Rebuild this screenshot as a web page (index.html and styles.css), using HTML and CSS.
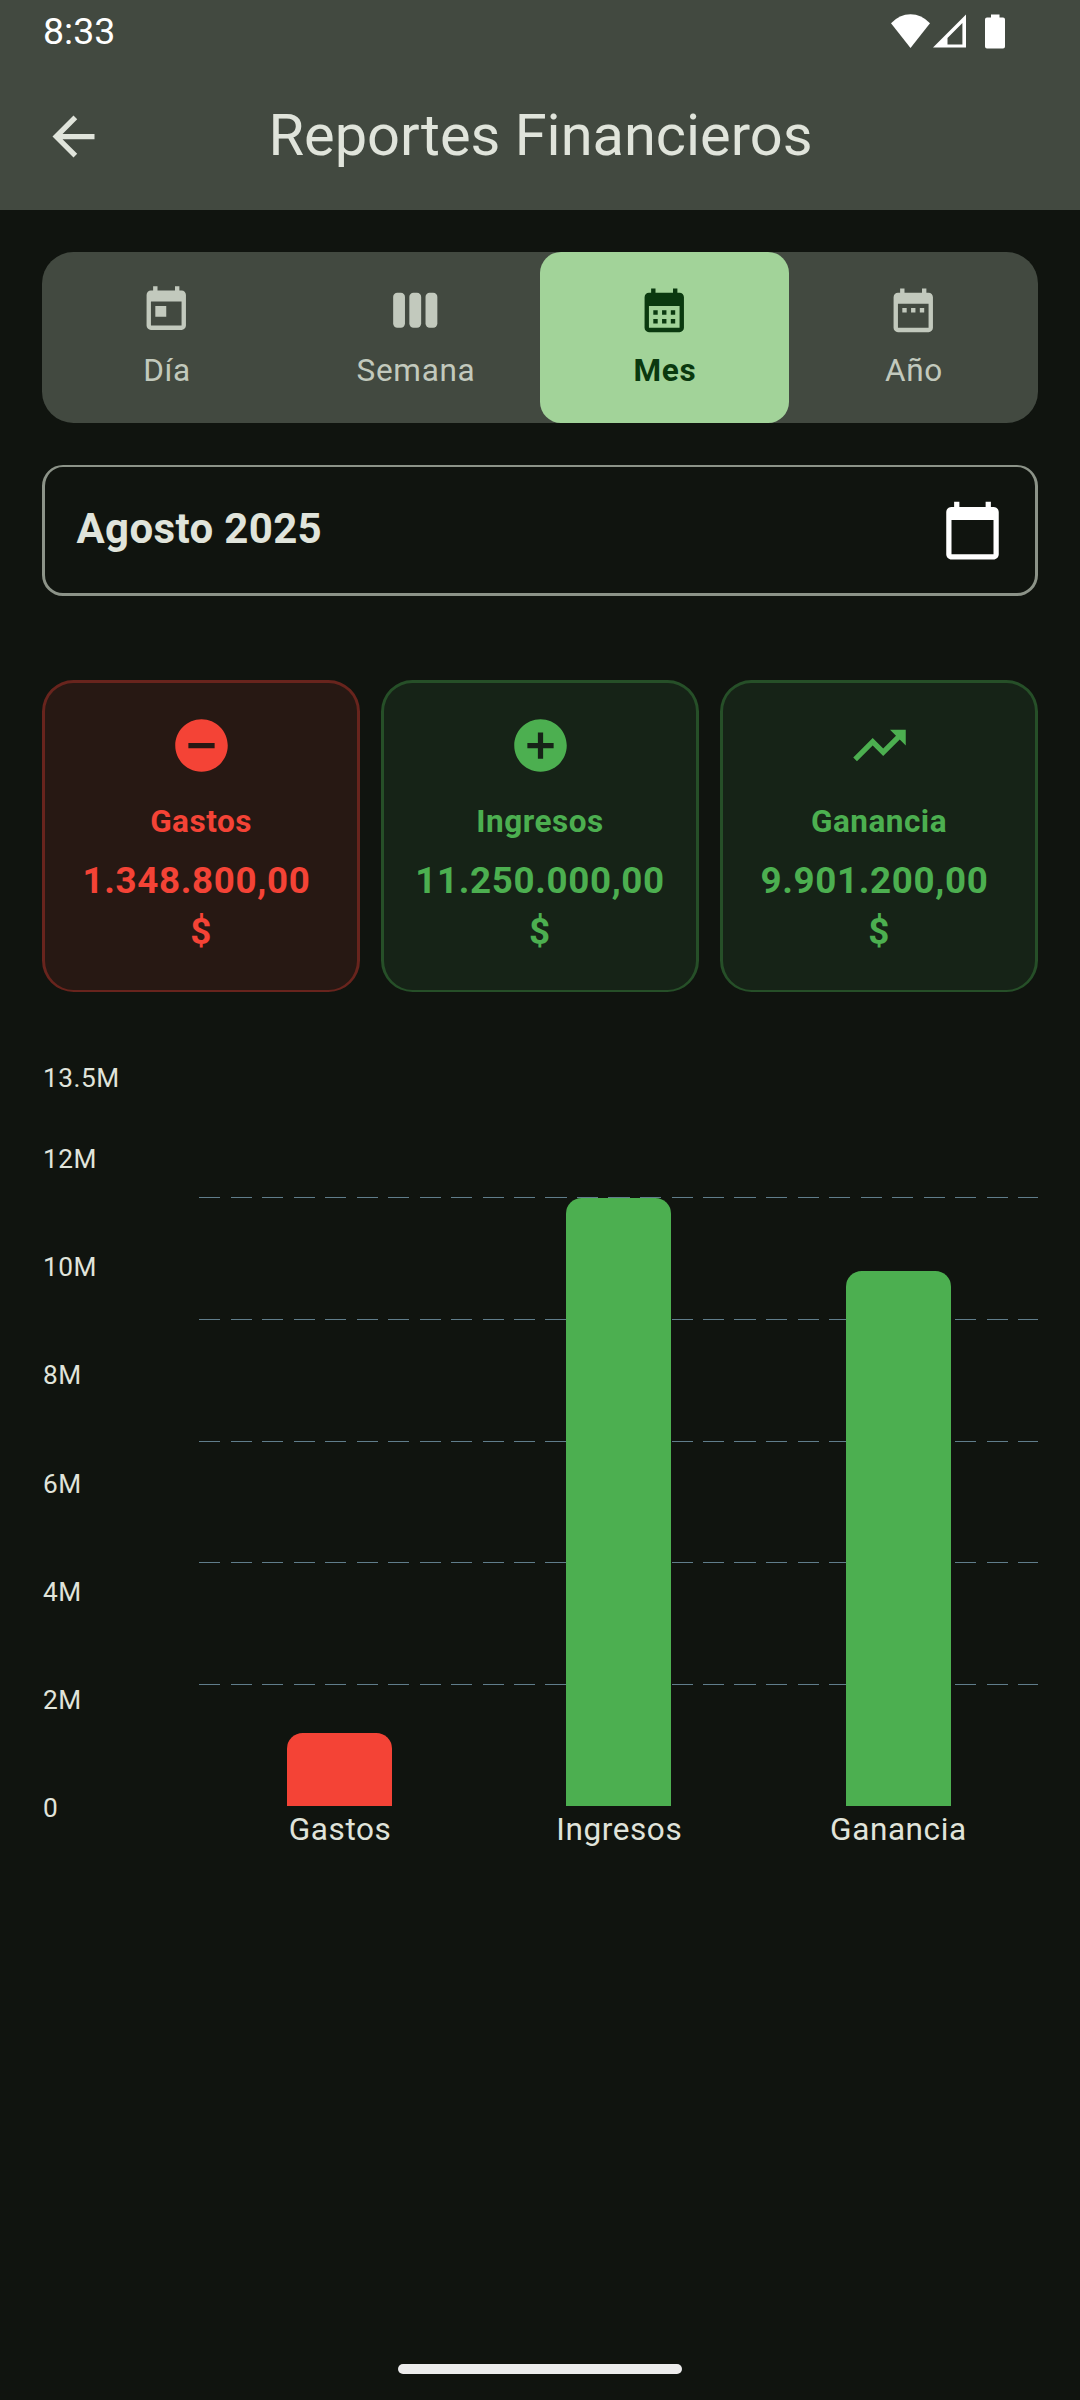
FILE: index.html
```html
<!DOCTYPE html>
<html lang="es">
<head>
<meta charset="utf-8">
<title>Reportes Financieros</title>
<link rel="stylesheet" href="styles.css">
</head>
<body>
<header class="header">
  <div class="status-bar">
    <span class="clock">8:33</span>
    <div class="status-icons">
      <svg class="wifi" viewBox="0 0 39 34"><path d="M0 9.3Q8.5.3 19.5.3T39 9.3L19.5 34z"/></svg>
      <svg class="cell" viewBox="0 0 33 33"><path fill-rule="evenodd" d="M33 0V33H0zM29.4 8.5L14.5 23.4V30H29.4z"/></svg>
      <svg class="battery" viewBox="0 0 20 34"><path d="M6 0h8.5v3H18a2 2 0 0 1 2 2v27a2 2 0 0 1-2 2H2a2 2 0 0 1-2-2V5a2 2 0 0 1 2-2h4z"/></svg>
    </div>
  </div>
  <div class="app-bar">
    <div class="leading"><svg class="icon-lg" viewBox="0 0 24 24"><path d="M20 11H7.83l5.59-5.59L12 4l-8 8 8 8 1.41-1.41L7.83 13H20v-2z"/></svg></div>
    <h1 class="title">Reportes Financieros</h1>
  </div>
</header>

<main class="content">
  <nav class="tabs">
    <div class="tab">
      <svg class="icon-sm" viewBox="0 0 24 24"><path d="M19 3h-1V1h-2v2H8V1H6v2H5c-1.11 0-1.99.9-1.99 2L3 19c0 1.1.89 2 2 2h14c1.1 0 2-.9 2-2V5c0-1.1-.9-2-2-2zm0 16H5V8h14v11zM7 10h5v5H7z"/></svg>
      <span>Día</span>
    </div>
    <div class="tab">
      <svg class="icon-sm" viewBox="0 0 24 24"><rect x="1.9" y="4" width="5.4" height="16" rx="1.9"/><rect x="9.3" y="4" width="5.4" height="16" rx="1.9"/><rect x="16.7" y="4" width="5.4" height="16" rx="1.9"/></svg>
      <span>Semana</span>
    </div>
    <div class="tab tab-selected">
      <svg class="icon-sm" viewBox="0 0 24 24"><path d="M19 4h-1V2h-2v2H8V2H6v2H5c-1.11 0-1.99.9-1.99 2L3 20c0 1.1.89 2 2 2h14c1.1 0 2-.9 2-2V6c0-1.1-.9-2-2-2zm0 16H5V10h14v10zM9 14H7v-2h2v2zm4 0h-2v-2h2v2zm4 0h-2v-2h2v2zm-8 4H7v-2h2v2zm4 0h-2v-2h2v2zm4 0h-2v-2h2v2z"/></svg>
      <span>Mes</span>
    </div>
    <div class="tab">
      <svg class="icon-sm" viewBox="0 0 24 24"><path d="M9 11H7v2h2v-2zm4 0h-2v2h2v-2zm4 0h-2v2h2v-2zm2-7h-1V2h-2v2H8V2H6v2H5c-1.11 0-1.99.9-1.99 2L3 20c0 1.1.89 2 2 2h14c1.1 0 2-.9 2-2V6c0-1.1-.9-2-2-2zm0 16H5V9h14v11z"/></svg>
      <span>Año</span>
    </div>
  </nav>

  <div class="period">
    <span class="period-text">Agosto 2025</span>
    <svg class="icon-lg" viewBox="0 0 24 24"><path d="M20 3h-1V1h-2v2H7V1H5v2H4c-1.1 0-2 .9-2 2v16c0 1.1.9 2 2 2h16c1.1 0 2-.9 2-2V5c0-1.1-.9-2-2-2zm0 18H4V8h16v13z"/></svg>
  </div>

  <section class="cards">
    <div class="card card-red">
      <svg class="icon-lg" viewBox="0 0 24 24"><path d="M12 2C6.48 2 2 6.48 2 12s4.48 10 10 10 10-4.48 10-10S17.52 2 12 2zm5 11H7v-2h10v2z"/></svg>
      <span class="card-label">Gastos</span>
      <div class="card-amount"><span class="figure">1.348.800,00</span><span>$</span></div>
    </div>
    <div class="card card-green">
      <svg class="icon-lg" viewBox="0 0 24 24"><path d="M12 2C6.48 2 2 6.48 2 12s4.48 10 10 10 10-4.48 10-10S17.52 2 12 2zm5 11h-4v4h-2v-4H7v-2h4V7h2v4h4v2z"/></svg>
      <span class="card-label">Ingresos</span>
      <div class="card-amount"><span>11.250.000,00</span><span>$</span></div>
    </div>
    <div class="card card-green">
      <svg class="icon-lg" viewBox="0 0 24 24"><path d="M16 6l2.29 2.29-4.88 4.88-4-4L2 16.59 3.41 18l6-6 4 4 6.3-6.29L22 12V6z"/></svg>
      <span class="card-label">Ganancia</span>
      <div class="card-amount"><span class="figure">9.901.200,00</span><span>$</span></div>
    </div>
  </section>

  <section class="chart">
    <div class="axis">
      <span>13.5M</span><span>12M</span><span>10M</span><span>8M</span><span>6M</span><span>4M</span><span>2M</span><span>0</span>
    </div>
    <div class="plot">
      <div class="gridlines">
        <div class="gridline"></div>
        <div class="gridline"></div>
        <div class="gridline"></div>
        <div class="gridline"></div>
        <div class="gridline"></div>
      </div>
      <div class="bars">
        <div class="slot"><div class="bar bar-red" style="height:73px"></div></div>
        <div class="slot"><div class="bar bar-green" style="height:608px"></div></div>
        <div class="slot"><div class="bar bar-green" style="height:535px"></div></div>
      </div>
      <div class="bar-labels"><span>Gastos</span><span>Ingresos</span><span>Ganancia</span></div>
    </div>
  </section>
</main>

<footer class="nav-bar"><div class="handle"></div></footer>
</body>
</html>
```
FILE: styles.css
```css
* { box-sizing: border-box; }

body {
  margin: 0;
  width: 1080px;
  height: 2400px;
  display: flex;
  flex-direction: column;
  overflow: hidden;
  background: #10140f;
  color: #e0e4db;
  font-family: Roboto, "Liberation Sans", sans-serif;
}

svg { display: block; fill: currentColor; flex: none; }
.icon-sm { width: 52.5px; height: 52.5px; }
.icon-lg { width: 63px; height: 63px; }

/* Header */
.header { height: 210px; background: #424940; }

.status-bar {
  height: 63px;
  padding: 0 75px 0 43px;
  display: flex;
  justify-content: space-between;
  color: #fff;
}
.clock { font-size: 37.5px; line-height: 62px; }
.status-icons { display: flex; padding-top: 14px; }
.wifi { width: 39px; height: 34px; margin-right: 3px; }
.cell { width: 33px; height: 34px; margin-right: 19px; }
.battery { width: 20px; height: 35px; }

.app-bar {
  height: 147px;
  display: grid;
  grid-template-columns: 147px 1fr 147px;
  align-items: center;
}
.leading { display: flex; justify-content: center; }
.title {
  margin: 0;
  padding: 0 0 2px 1px;
  font-size: 57.75px;
  font-weight: 400;
  line-height: 73px;
  text-align: center;
}

/* Content */
.content { flex: 1; padding: 42px 42px 0; }

.tabs {
  height: 171px;
  display: grid;
  grid-template-columns: repeat(4, 1fr);
  background: #424940;
  border-radius: 31.5px;
  color: #c2c9bd;
}
.tab {
  padding-top: 31.5px;
  display: flex;
  flex-direction: column;
  align-items: center;
  gap: 11.5px;
  border-radius: 21px;
  font-size: 31.5px;
  line-height: 45px;
  letter-spacing: 0.7px;
}
.tab span { padding-left: 1px; }
.tab-selected { background: #a2d399; color: #0a390f; font-weight: 700; }

.period {
  height: 131px;
  margin-top: 42px;
  padding: 0 31.5px;
  display: flex;
  justify-content: space-between;
  align-items: center;
  border: solid #8c9388;
  border-width: 2px 3px 3px;
  border-radius: 21px;
  font-size: 42px;
  font-weight: 700;
  letter-spacing: 0.35px;
}
.period svg { color: #fff; }
.period-text { padding-bottom: 4px; }

.cards {
  margin-top: 84px;
  display: grid;
  grid-template-columns: repeat(3, 1fr);
  gap: 21px;
}
.card {
  height: 312px;
  padding-top: 31px;
  display: flex;
  flex-direction: column;
  align-items: center;
  border: solid;
  border-width: 3px 3px 2px;
  border-radius: 31.5px;
  font-weight: 700;
}
.card-red { border-color: #68241d; background: #271813; }
.card-green { border-color: #264f28; background: #162317; }
.card-red > * { color: #f44336; }
.card-green > * { color: #4caf50; }
.card-label { margin-top: 22px; font-size: 31.5px; line-height: 45px; letter-spacing: 0.5px; }
.card-amount {
  margin-top: 11px;
  display: flex;
  flex-direction: column;
  align-items: center;
  font-size: 36.75px;
  line-height: 51px;
  letter-spacing: 0.65px;
}
.figure { padding-right: 9px; }

/* Chart */
.chart { margin-top: 70px; display: grid; grid-template-columns: 157.5px 1fr; }
.axis {
  display: grid;
  grid-template-rows: 81px repeat(6, 108.2px) 32px;
  padding-left: 1px;
  font-size: 26.25px;
  line-height: 32px;
  letter-spacing: 0.5px;
}
.plot { display: grid; grid-template-rows: 731px 45px; padding-top: 13px; align-content: start; }
.gridlines {
  grid-area: 1 / 1;
  margin-left: -0.5px;
  padding-top: 122px;
  display: grid;
  grid-template-rows: 122px 122px 121px 122px 1px;
  align-content: start;
}
.gridline {
  height: 1px;
  background: repeating-linear-gradient(90deg, #607d8b 0 21px, transparent 21px 31.5px);
}
.bars { grid-area: 1 / 1; display: grid; grid-template-columns: repeat(3, 1fr); align-items: end; }
.slot { display: flex; justify-content: center; }
.bar { width: 105px; border-radius: 15.75px 15.75px 0 0; }
.bar-red { background: #f44336; }
.bar-green { background: #4caf50; }
.bar-labels {
  grid-area: 2 / 1;
  display: grid;
  grid-template-columns: repeat(3, 1fr);
  padding-left: 1px;
  text-align: center;
  font-size: 31.5px;
  line-height: 47px;
  letter-spacing: 0.6px;
}

/* System navigation */
.nav-bar { height: 63px; padding-top: 27px; display: flex; justify-content: center; }
.handle { width: 284px; height: 10px; border-radius: 5px; background: #ececec; }
```
